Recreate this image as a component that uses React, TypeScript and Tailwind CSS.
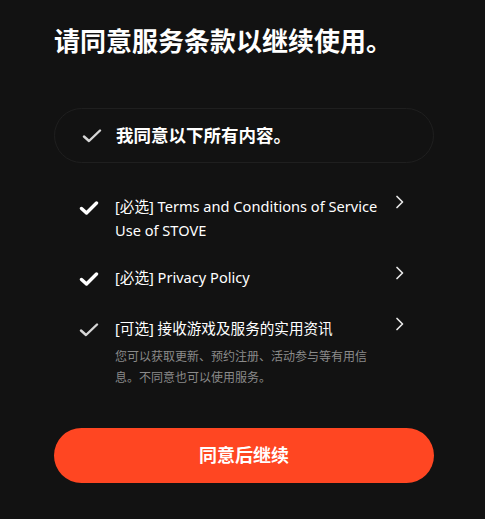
const font = { fontFamily: '"Noto Sans", "Noto Sans CJK SC", sans-serif' };

function Check({ bold }: { bold?: boolean }) {
  return (
    <svg width="20" height="14" viewBox="0 0 20 14" fill="none">
      <path
        d={bold ? 'M2.5 7.5 L7.5 12 L17.5 2' : 'M2 7.5 L7 12 L18 1.5'}
        stroke={bold ? '#ffffff' : '#d6d6d6'}
        strokeWidth={bold ? 3.4 : 2.4}
        strokeLinecap="round"
        strokeLinejoin="round"
      />
    </svg>
  );
}

function Chevron() {
  return (
    <svg width="10" height="14" viewBox="0 0 10 14" fill="none">
      <path d="M2 1.5 L7.5 7 L2 12.5" stroke="#e6e6e6" strokeWidth="1.7" strokeLinecap="round" strokeLinejoin="round" />
    </svg>
  );
}

function Item({
  bold,
  children,
  desc,
  className,
}: {
  bold?: boolean;
  children: React.ReactNode;
  desc?: React.ReactNode;
  className?: string;
}) {
  return (
    <div className={`flex items-start pl-[25px] ${className ?? ''}`}>
      <div className="w-[22px] h-6 flex items-center pt-[3px]">
        <Check bold={bold} />
      </div>
      <div className="ml-[14px] w-[272px]">
        <p className="text-[14.6px] leading-6 text-white">{children}</p>
        {desc && <p className="mt-[6px] w-[262px] text-[12px] leading-[21px] text-[#8a8a8a]">{desc}</p>}
      </div>
      <div className="ml-[8px] h-6 flex items-center -mt-[4px]">
        <Chevron />
      </div>
    </div>
  );
}

export default function App() {
  return (
    <div className="min-h-[519px] w-[485px] bg-[#121212] pl-[54px] pr-[51px] pt-[25px]" style={font}>
      <h1 className="text-[26px] leading-8 font-bold text-white">请同意服务条款以继续使用。</h1>

      <div className="mt-[51px] h-[55px] rounded-full border border-[#1f1f1f] flex items-center pl-[27px]">
        <Check />
        <span className="ml-[14px] text-[17.5px] font-bold text-white">我同意以下所有内容。</span>
      </div>

      <div className="mt-[31px] flex flex-col">
        <Item bold>[必选] Terms and Conditions of Service Use of STOVE</Item>
        <Item bold className="mt-[23px]">[必选] Privacy Policy</Item>
        <Item
          className="mt-[27px]"
          desc="您可以获取更新、预约注册、活动参与等有用信息。不同意也可以使用服务。"
        >
          [可选] 接收游戏及服务的实用资讯
        </Item>
      </div>

      <button className="mt-[40px] w-full h-[55px] rounded-full bg-[#ff4622] text-white text-[18px] font-bold">
        同意后继续
      </button>
    </div>
  );
}
